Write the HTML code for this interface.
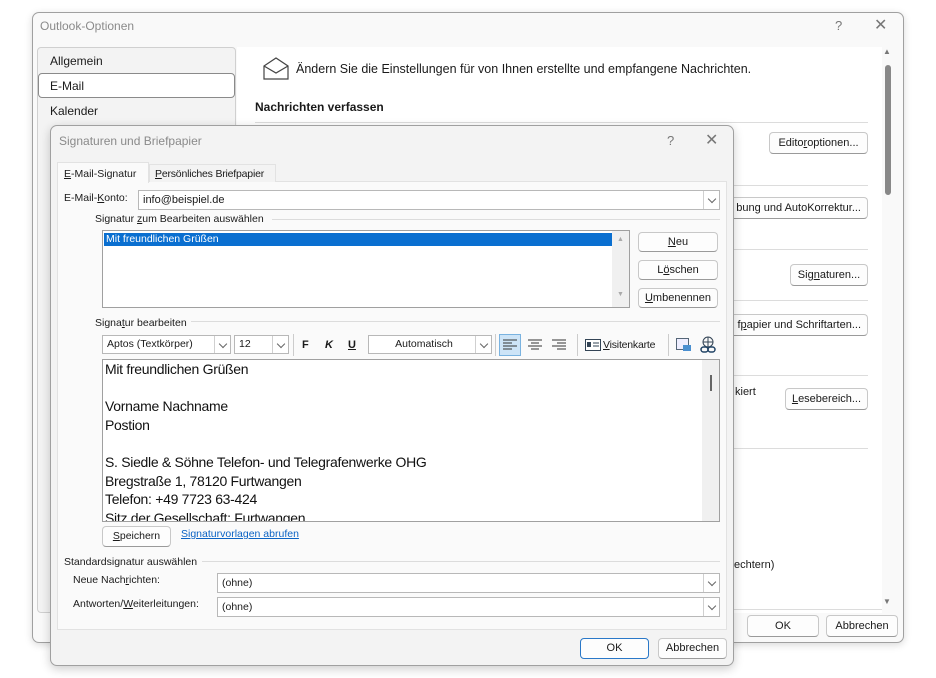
<!DOCTYPE html>
<html><head><meta charset="utf-8"><style>
*{box-sizing:border-box;margin:0;padding:0}
body{width:936px;height:678px;background:#fff;font-family:"Liberation Sans",sans-serif;font-size:11px;color:#1a1a1a;position:relative;overflow:hidden}
.a{position:absolute;white-space:nowrap}
.btn{position:absolute;background:#fdfdfd;border:1px solid #c8c8c8;border-bottom-color:#9a9a9a;border-radius:4px;text-align:center;font-size:11px;line-height:20px;color:#1a1a1a;white-space:nowrap}
.hr{position:absolute;height:1px;background:#dcdcdc}
.combo{position:absolute;background:#fff;border:1px solid #b8b8b8;font-size:11px;padding-left:4px;white-space:nowrap}
.dd{position:absolute;right:0;top:0;bottom:0;width:16px;border-left:1px solid #d0d0d0}
.dd:after{content:"";position:absolute;left:5px;top:50%;margin-top:-4px;width:5px;height:5px;border-right:1px solid #666;border-bottom:1px solid #666;transform:rotate(45deg)}
u{text-decoration:underline}
</style></head><body>
<div class="a" style="left:32px;top:12px;width:872px;height:631px;border:1px solid #a0a0a0;border-radius:7px;background:#f9f9f9;box-shadow:0 2px 8px rgba(0,0,0,.15)"></div>
<div class="a" style="left:40px;top:19px;font-size:12px;color:#8a8a8a">Outlook-Optionen</div>
<div class="a" style="left:835px;top:18px;font-size:13px;color:#777">?</div>
<div class="a" style="left:874px;top:15px;font-size:16px;color:#777">✕</div>
<div class="a" style="left:37px;top:47px;width:199px;height:566px;background:#f3f3f3;border:1px solid #d0d0d0;border-radius:4px"></div>
<div class="a" style="left:50px;top:54px;font-size:12px">Allgemein</div>
<div class="a" style="left:38px;top:73px;width:197px;height:25px;background:#fff;border:1px solid #8a8a8a;border-radius:4px"></div>
<div class="a" style="left:50px;top:79px;font-size:12px">E-Mail</div>
<div class="a" style="left:50px;top:104px;font-size:12px">Kalender</div>
<div class="a" style="left:237px;top:47px;width:645px;height:566px;background:#fff"></div>
<svg class="a" style="left:262px;top:55px" width="28" height="26" viewBox="0 0 28 26"><path d="M2 11 L14 3 L26 11 V24 H2 Z M2 11 L14 18 L26 11" fill="none" stroke="#444" stroke-width="1.2"/></svg>
<div class="a" style="left:296px;top:62px;font-size:12.5px">Ändern Sie die Einstellungen für von Ihnen erstellte und empfangene Nachrichten.</div>
<div class="a" style="left:255px;top:100px;font-size:12px;font-weight:bold">Nachrichten verfassen</div>
<div class="hr" style="left:255px;top:122px;width:613px"></div>
<div class="btn" style="left:769px;top:132px;width:99px;height:22px">Edito<u>r</u>optionen...</div>
<div class="hr" style="left:734px;top:185px;width:134px"></div>
<div class="btn" style="left:720px;top:197px;width:148px;height:22px;text-align:right;padding-right:6px">bung und AutoKorrektur...</div>
<div class="hr" style="left:734px;top:249px;width:134px"></div>
<div class="btn" style="left:790px;top:264px;width:78px;height:22px">Sig<u>n</u>aturen...</div>
<div class="hr" style="left:734px;top:300px;width:134px"></div>
<div class="btn" style="left:720px;top:314px;width:148px;height:22px;text-align:right;padding-right:6px">f<u>p</u>apier und Schriftarten...</div>
<div class="hr" style="left:734px;top:375px;width:134px"></div>
<div class="a" style="left:735px;top:386px;font-size:11px">kiert</div>
<div class="btn" style="left:785px;top:388px;width:83px;height:22px"><u>L</u>esebereich...</div>
<div class="hr" style="left:734px;top:448px;width:134px"></div>
<div class="a" style="left:734px;top:559px;font-size:11px">echtern)</div>
<div class="hr" style="left:734px;top:609px;width:148px"></div>
<div class="a" style="left:885px;top:65px;width:6px;height:130px;background:#888;border-radius:3px"></div>
<div class="a" style="left:883px;top:47px;font-size:8px;color:#777">▲</div>
<div class="a" style="left:883px;top:597px;font-size:8px;color:#777">▼</div>
<div class="btn" style="left:747px;top:615px;width:72px;height:22px">OK</div>
<div class="btn" style="left:826px;top:615px;width:72px;height:22px">Abbrechen</div>

<div class="a" style="left:50px;top:125px;width:684px;height:541px;border:1px solid #a0a0a0;border-radius:7px;background:#f3f3f3;box-shadow:0 3px 10px rgba(0,0,0,.2)"></div>
<div class="a" style="left:59px;top:134px;font-size:12px;color:#8a8a8a">Signaturen und Briefpapier</div>
<div class="a" style="left:667px;top:133px;font-size:13px;color:#777">?</div>
<div class="a" style="left:705px;top:130px;font-size:16px;color:#777">✕</div>
<div class="a" style="left:57px;top:181px;width:670px;height:449px;background:#fafafa;border:1px solid #e2e2e2"></div>
<div class="a" style="left:57px;top:162px;width:92px;height:21px;background:#fafafa;border:1px solid #e2e2e2;border-bottom:none;padding:5px 0 0 6px;font-size:10.5px"><u>E</u>-Mail-Signatur</div>
<div class="a" style="left:149px;top:164px;width:127px;height:18px;background:#f3f3f3;border:1px solid #e2e2e2;border-bottom:none;padding:3px 0 0 5px;font-size:10.5px;letter-spacing:-0.2px"><u>P</u>ersönliches Briefpapier</div>
<div class="a" style="left:64px;top:192px;font-size:10.5px">E-Mail-<u>K</u>onto:</div>
<div class="combo" style="left:138px;top:190px;width:582px;height:20px;line-height:18px">info@beispiel.de<div class="dd"></div></div>
<div class="a" style="left:95px;top:213px;font-size:10.5px">Signatur <u>z</u>um Bearbeiten auswählen</div>
<div class="hr" style="left:272px;top:219px;width:448px"></div>
<div class="a" style="left:102px;top:230px;width:528px;height:78px;background:#fff;border:1px solid #a0a0a0"></div>
<div class="a" style="left:104px;top:233px;width:508px;height:13px;background:#0a6fd0;color:#fff;font-size:10.5px;line-height:13px;padding-left:2px">Mit freundlichen Grüßen</div>
<div class="a" style="left:612px;top:231px;width:17px;height:76px;background:#f0f0f0;font-size:7px;color:#aaa;text-align:center;padding-top:5px">▲<div style="margin-top:48px">▼</div></div>
<div class="btn" style="left:638px;top:232px;width:80px;height:20px;line-height:18px"><u>N</u>eu</div>
<div class="btn" style="left:638px;top:260px;width:80px;height:20px;line-height:18px">L<u>ö</u>schen</div>
<div class="btn" style="left:638px;top:288px;width:80px;height:20px;line-height:18px"><u>U</u>mbenennen</div>
<div class="hr" style="left:95px;top:321px;width:625px"></div>
<div class="a" style="left:95px;top:317px;font-size:10.5px;background:#fafafa;padding-right:4px">Signa<u>t</u>ur bearbeiten</div>
<div class="combo" style="left:102px;top:335px;width:129px;height:19px;line-height:17px;font-size:10.5px">Aptos (Textkörper)<div class="dd"></div></div>
<div class="combo" style="left:234px;top:335px;width:55px;height:19px;line-height:17px;font-size:10.5px">12<div class="dd"></div></div>
<div class="a" style="left:293px;top:334px;width:1px;height:22px;background:#ccc"></div>
<div class="a" style="left:302px;top:339px;font-weight:bold">F</div>
<div class="a" style="left:325px;top:339px;font-weight:bold;font-style:italic">K</div>
<div class="a" style="left:348px;top:339px;font-weight:bold;text-decoration:underline">U</div>
<div class="combo" style="left:368px;top:335px;width:124px;height:19px;line-height:17px;text-align:center;padding-right:16px;font-size:10.5px">Automatisch<div class="dd"></div></div>
<div class="a" style="left:495px;top:334px;width:1px;height:22px;background:#ccc"></div>
<div class="a" style="left:499px;top:334px;width:22px;height:22px;background:#cde4f7;border:1px solid #7ab3e0"></div>
<svg class="a" style="left:503px;top:339px" width="14" height="12"><path d="M0 1H14M0 4H9M0 7H14M0 10H9" stroke="#333"/></svg>
<svg class="a" style="left:528px;top:339px" width="14" height="12"><path d="M0 1H14M3 4H11M0 7H14M3 10H11" stroke="#333"/></svg>
<svg class="a" style="left:552px;top:339px" width="14" height="12"><path d="M0 1H14M5 4H14M0 7H14M5 10H14" stroke="#333"/></svg>
<div class="a" style="left:577px;top:334px;width:1px;height:22px;background:#ccc"></div>
<svg class="a" style="left:585px;top:339px" width="16" height="12"><rect x=".5" y=".5" width="15" height="11" fill="#fff" stroke="#345"/><rect x="2" y="3" width="4" height="5" fill="#345"/><path d="M8 4H14M8 7H14" stroke="#345"/></svg>
<div class="a" style="left:603px;top:339px;font-size:10.5px;letter-spacing:-0.2px"><u>V</u>isitenkarte</div>
<div class="a" style="left:668px;top:334px;width:1px;height:22px;background:#ccc"></div>
<svg class="a" style="left:676px;top:337px" width="16" height="16"><rect x=".5" y="1.5" width="12" height="11" fill="#eef" stroke="#567"/><rect x="7" y="8" width="8" height="6" fill="#4a8fd0"/></svg>
<svg class="a" style="left:700px;top:336px" width="16" height="18"><circle cx="8" cy="6" r="5" fill="none" stroke="#345"/><path d="M3 6H13M8 1V11" stroke="#345"/><rect x="1" y="11" width="7" height="5" rx="2.5" fill="none" stroke="#246" stroke-width="1.5"/><rect x="8" y="11" width="7" height="5" rx="2.5" fill="none" stroke="#246" stroke-width="1.5"/></svg>
<div class="a" style="left:102px;top:359px;width:618px;height:163px;background:#fff;border:1px solid #a0a0a0;overflow:hidden"></div>
<div class="a" style="left:702px;top:360px;width:17px;height:161px;background:#f0f0f0"></div>
<div class="a" style="left:710px;top:375px;width:2px;height:16px;background:#666"></div>
<div class="a" style="left:105px;top:360px;width:595px;height:161px;overflow:hidden;font-size:14px;letter-spacing:-0.3px;line-height:18.6px;color:#111">Mit freundlichen Grüßen<br><br>Vorname Nachname<br>Postion<br><br>S. Siedle &amp; Söhne Telefon- und Telegrafenwerke OHG<br>Bregstraße 1, 78120 Furtwangen<br>Telefon: +49 7723 63-424<br>Sitz der Gesellschaft: Furtwangen</div>
<div class="btn" style="left:102px;top:526px;width:69px;height:21px;line-height:19px;font-size:10.5px"><u>S</u>peichern</div>
<div class="a" style="left:181px;top:528px;color:#0b63c4;text-decoration:underline;font-size:10.5px">Signaturvorlagen abrufen</div>
<div class="hr" style="left:64px;top:561px;width:656px"></div>
<div class="a" style="left:64px;top:556px;font-size:10.5px;background:#fafafa;padding-right:5px">Standardsignatur auswählen</div>
<div class="a" style="left:73px;top:574px;font-size:10.5px">Neue Nach<u>r</u>ichten:</div>
<div class="combo" style="left:217px;top:573px;width:503px;height:20px;line-height:18px;font-size:10.5px">(ohne)<div class="dd"></div></div>
<div class="a" style="left:73px;top:598px;font-size:10.5px">Antworten/<u>W</u>eiterleitungen:</div>
<div class="combo" style="left:217px;top:597px;width:503px;height:20px;line-height:18px;font-size:10.5px">(ohne)<div class="dd"></div></div>
<div class="btn" style="left:580px;top:638px;width:69px;height:21px;line-height:19px;border-color:#2a78c8">OK</div>
<div class="btn" style="left:658px;top:638px;width:69px;height:21px;line-height:19px">Abbrechen</div>
</body></html>
